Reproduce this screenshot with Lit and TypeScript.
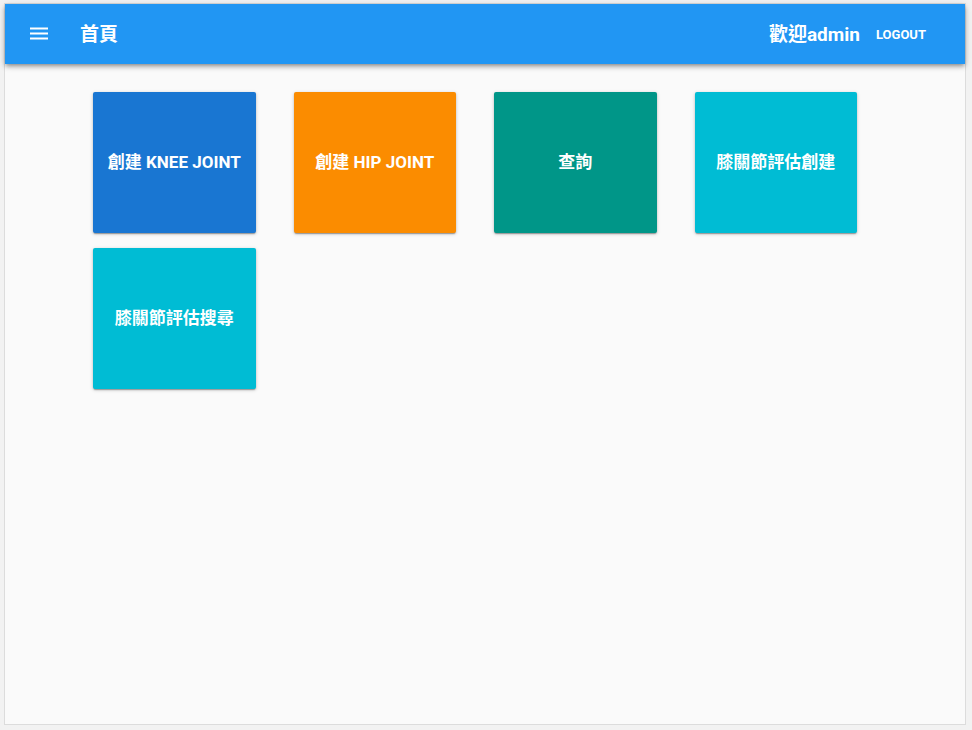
import { LitElement, html, css } from "lit";
import { customElement, property } from "lit/decorators.js";

type Tile = { label: string; tone: string };

const TILES: Tile[] = [
  { label: "創建 KNEE JOINT", tone: "blue" },
  { label: "創建 HIP JOINT", tone: "orange" },
  { label: "查詢", tone: "teal" },
  { label: "膝關節評估創建", tone: "cyan" },
  { label: "膝關節評估搜尋", tone: "cyan" },
];

@customElement("app-toolbar")
export class AppToolbar extends LitElement {
  @property() heading = "";
  @property() user = "";

  static styles = css`
    :host {
      display: block;
    }
    .bar {
      display: flex;
      align-items: center;
      box-sizing: border-box;
      height: 60px;
      padding: 0 31px 0 22px;
      background: #2196f3;
      color: #fff;
      box-shadow: 0 2px 4px -1px rgba(0, 0, 0, 0.3), 0 3px 5px rgba(0, 0, 0, 0.18),
        0 1px 9px rgba(0, 0, 0, 0.1);
    }
    button {
      border: 0;
      background: none;
      color: inherit;
      font-family: inherit;
      cursor: pointer;
    }
    .menu {
      display: flex;
      padding: 0;
    }
    .menu svg {
      width: 24px;
      height: 24px;
      fill: currentColor;
    }
    .title,
    .welcome {
      margin: 0;
      padding-top: 2px;
      font-size: 19px;
      line-height: 28px;
      font-weight: 700;
      white-space: nowrap;
    }
    .title {
      flex: 1;
      margin-left: 29px;
    }
    .logout {
      margin-left: 8px;
      padding: 10px 8px 8px;
      font-size: 13px;
      line-height: 20px;
      font-weight: 700;
      text-transform: uppercase;
    }
  `;

  render() {
    return html`
      <header class="bar">
        <button class="menu" type="button" aria-label="選單">
          <svg viewBox="0 0 24 24" aria-hidden="true">
            <path d="M3 17.5h18v-2H3v2zm0-5h18v-2H3v2zm0-7v2h18v-2H3z" />
          </svg>
        </button>
        <h1 class="title">${this.heading}</h1>
        <span class="welcome">歡迎${this.user}</span>
        <button class="logout" type="button">Logout</button>
      </header>
    `;
  }
}

@customElement("app-root")
export class AppRoot extends LitElement {
  static styles = css`
    :host {
      display: flex;
      box-sizing: border-box;
      min-height: 100vh;
      padding: 3px 6px 5px 4px;
      background: #f2f2f2;
      font-family: Roboto, "Noto Sans CJK TC", sans-serif;
    }
    .frame {
      flex: 1;
      min-width: 0;
      border: 1px solid #dcdcdc;
      background: #fafafa;
    }
    .tiles {
      display: grid;
      grid-template-columns: repeat(auto-fill, minmax(160px, 1fr));
      gap: 15px 38px;
      padding: 28px 108px 28px 88px;
    }
    .tile {
      height: 141px;
      padding: 0 8px 2px;
      border: 0;
      border-radius: 2px;
      color: #fff;
      font-family: inherit;
      font-size: 17px;
      line-height: 24px;
      font-weight: 700;
      cursor: pointer;
      box-shadow: 0 2px 1px -1px rgba(0, 0, 0, 0.2), 0 1px 2px rgba(0, 0, 0, 0.2),
        0 1px 4px rgba(0, 0, 0, 0.14);
    }
    .blue {
      background: #1976d2;
    }
    .orange {
      background: #fb8c00;
    }
    .teal {
      background: #009688;
    }
    .cyan {
      background: #00bcd4;
    }
  `;

  render() {
    return html`
      <div class="frame">
        <app-toolbar heading="首頁" user="admin"></app-toolbar>
        <main class="tiles">
          ${TILES.map(
            (tile) => html`<button class="tile ${tile.tone}" type="button">${tile.label}</button>`
          )}
        </main>
      </div>
    `;
  }
}
